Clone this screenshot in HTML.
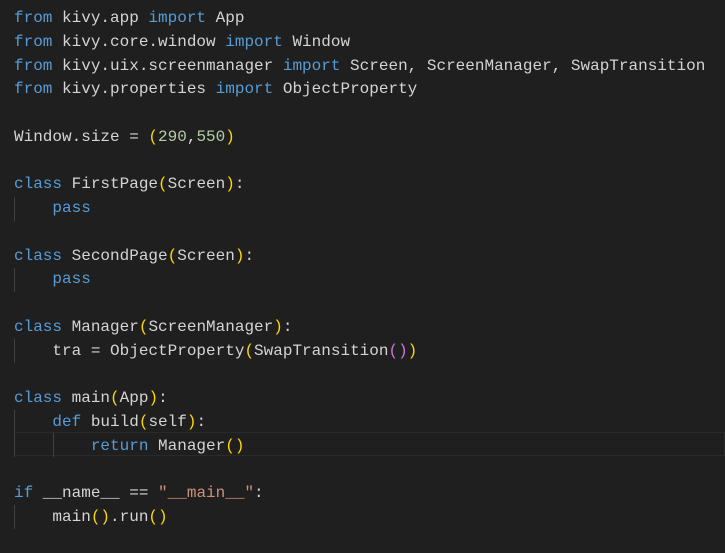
<!DOCTYPE html>
<html><head><style>
html,body{margin:0;padding:0;background:#1f1f1f;width:725px;height:553px;overflow:hidden}
#c{position:absolute;left:14px;top:7px;font-family:"Liberation Mono",monospace;font-size:16px;line-height:23.76px;color:#d4d4d4;white-space:pre}
.k{color:#569cd6}.p{color:#ffd700}.q{color:#da70d6}.n{color:#b5cea8}.s{color:#ce9178}
.g{position:absolute;width:1px;background:#404040}
.hl{position:absolute;left:14px;top:432px;width:711px;height:24px;border:1px solid #2a2a2a;box-sizing:border-box}
</style></head><body>
<div class="hl"></div>
<div class="g" style="left:14px;top:197px;height:24px"></div>
<div class="g" style="left:14px;top:268px;height:24px"></div>
<div class="g" style="left:14px;top:339px;height:24px"></div>
<div class="g" style="left:14px;top:410px;height:47px"></div>
<div class="g" style="left:53px;top:433px;height:24px"></div>
<div class="g" style="left:14px;top:505px;height:24px"></div>
<div id="c"><span class="k">from</span> kivy.app <span class="k">import</span> App
<span class="k">from</span> kivy.core.window <span class="k">import</span> Window
<span class="k">from</span> kivy.uix.screenmanager <span class="k">import</span> Screen, ScreenManager, SwapTransition
<span class="k">from</span> kivy.properties <span class="k">import</span> ObjectProperty

Window.size = <span class="p">(</span><span class="n">290</span>,<span class="n">550</span><span class="p">)</span>

<span class="k">class</span> FirstPage<span class="p">(</span>Screen<span class="p">)</span>:
    <span class="k">pass</span>

<span class="k">class</span> SecondPage<span class="p">(</span>Screen<span class="p">)</span>:
    <span class="k">pass</span>

<span class="k">class</span> Manager<span class="p">(</span>ScreenManager<span class="p">)</span>:
    tra = ObjectProperty<span class="p">(</span>SwapTransition<span class="q">()</span><span class="p">)</span>

<span class="k">class</span> main<span class="p">(</span>App<span class="p">)</span>:
    <span class="k">def</span> build<span class="p">(</span>self<span class="p">)</span>:
        <span class="k">return</span> Manager<span class="p">()</span>

<span class="k">if</span> __name__ == <span class="s">"__main__"</span>:
    main<span class="p">()</span>.run<span class="p">()</span></div>
</body></html>
